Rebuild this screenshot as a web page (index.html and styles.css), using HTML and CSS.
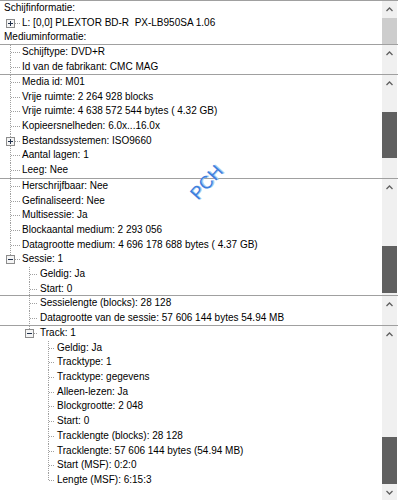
FILE: index.html
```html
<!DOCTYPE html>
<html>
<head>
<meta charset="utf-8">
<link rel="stylesheet" href="styles.css">
</head>
<body>
<div class="view">
  <div class="panel p1">
    <div class="tree">
      <div class="row"><span class="txt">Schijfinformatie:</span></div>
      <div class="row"><span class="g c1 bx-h"><span class="box plus"></span></span><span class="txt">L: [0,0] PLEXTOR BD-R  PX-LB950SA 1.06</span></div>
      <div class="row"><span class="txt">Mediuminformatie:</span></div>
    </div>
    <div class="sb">
      <div class="arr"><svg width="7" height="5" viewBox="0 0 7 5"><path d="M0.5 4 L3.5 1 L6.5 4" fill="none" stroke="#606060" stroke-width="1.3"/></svg></div>
      <div class="thumb light grow"></div>
    </div>
  </div>

  <div class="panel p2">
    <div class="tree">
      <div class="row"><span class="g c1 tee"></span><span class="txt">Schijftype: DVD+R</span></div>
      <div class="row"><span class="g c1 tee"></span><span class="txt">Id van de fabrikant: CMC MAG</span></div>
    </div>
    <div class="sb">
      <div class="arr"><svg width="7" height="5" viewBox="0 0 7 5"><path d="M0.5 4 L3.5 1 L6.5 4" fill="none" stroke="#606060" stroke-width="1.3"/></svg></div>
    </div>
  </div>

  <div class="panel p3">
    <div class="tree">
      <div class="row"><span class="g c1 tee"></span><span class="txt">Media id: M01</span></div>
      <div class="row"><span class="g c1 tee"></span><span class="txt">Vrije ruimte: 2 264 928 blocks</span></div>
      <div class="row"><span class="g c1 tee"></span><span class="txt">Vrije ruimte: 4 638 572 544 bytes ( 4.32 GB)</span></div>
      <div class="row"><span class="g c1 tee"></span><span class="txt">Kopieersnelheden: 6.0x...16.0x</span></div>
      <div class="row"><span class="g c1 bx-tee"><span class="box plus"></span></span><span class="txt">Bestandssystemen: ISO9660</span></div>
      <div class="row"><span class="g c1 tee"></span><span class="txt">Aantal lagen: 1</span></div>
      <div class="row"><span class="g c1 tee"></span><span class="txt">Leeg: Nee</span></div>
    </div>
    <div class="sb">
      <div class="arr"><svg width="7" height="5" viewBox="0 0 7 5"><path d="M0.5 4 L3.5 1 L6.5 4" fill="none" stroke="#606060" stroke-width="1.3"/></svg></div>
      <div class="track t20"></div>
      <div class="thumb dark h46"></div>
    </div>
  </div>

  <div class="panel p4">
    <div class="tree">
      <div class="row"><span class="g c1 tee"></span><span class="txt">Herschrijfbaar: Nee</span></div>
      <div class="row"><span class="g c1 tee"></span><span class="txt">Gefinaliseerd: Nee</span></div>
      <div class="row"><span class="g c1 tee"></span><span class="txt">Multisessie: Ja</span></div>
      <div class="row"><span class="g c1 tee"></span><span class="txt">Blockaantal medium: 2 293 056</span></div>
      <div class="row"><span class="g c1 tee"></span><span class="txt">Datagrootte medium: 4 696 178 688 bytes ( 4.37 GB)</span></div>
      <div class="row"><span class="g c1 bx-ell"><span class="box minus"></span></span><span class="txt">Sessie: 1</span></div>
      <div class="row"><span class="g c1"></span><span class="g c2 tee"></span><span class="txt">Geldig: Ja</span></div>
      <div class="row"><span class="g c1"></span><span class="g c2 tee"></span><span class="txt">Start: 0</span></div>
    </div>
    <div class="sb">
      <div class="arr"><svg width="7" height="5" viewBox="0 0 7 5"><path d="M0.5 4 L3.5 1 L6.5 4" fill="none" stroke="#606060" stroke-width="1.3"/></svg></div>
      <div class="track t50"></div>
      <div class="thumb dark h47"></div>
    </div>
  </div>

  <div class="panel p5">
    <div class="tree">
      <div class="row"><span class="g c1"></span><span class="g c2 tee"></span><span class="txt">Sessielengte (blocks): 28 128</span></div>
      <div class="row"><span class="g c1"></span><span class="g c2 tee"></span><span class="txt">Datagrootte van de sessie: 57 606 144 bytes 54.94 MB</span></div>
    </div>
    <div class="sb">
      <div class="arr"><svg width="7" height="5" viewBox="0 0 7 5"><path d="M0.5 4 L3.5 1 L6.5 4" fill="none" stroke="#606060" stroke-width="1.3"/></svg></div>
    </div>
  </div>

  <div class="panel p6">
    <div class="tree">
      <div class="row"><span class="g c1"></span><span class="g c2 bx-ell"><span class="box minus"></span></span><span class="txt">Track: 1</span></div>
      <div class="row"><span class="g c1"></span><span class="g c2"></span><span class="g c3 tee"></span><span class="txt">Geldig: Ja</span></div>
      <div class="row"><span class="g c1"></span><span class="g c2"></span><span class="g c3 tee"></span><span class="txt">Tracktype: 1</span></div>
      <div class="row"><span class="g c1"></span><span class="g c2"></span><span class="g c3 tee"></span><span class="txt">Tracktype: gegevens</span></div>
      <div class="row"><span class="g c1"></span><span class="g c2"></span><span class="g c3 tee"></span><span class="txt">Alleen-lezen: Ja</span></div>
      <div class="row"><span class="g c1"></span><span class="g c2"></span><span class="g c3 tee"></span><span class="txt">Blockgrootte: 2 048</span></div>
      <div class="row"><span class="g c1"></span><span class="g c2"></span><span class="g c3 tee"></span><span class="txt">Start: 0</span></div>
      <div class="row"><span class="g c1"></span><span class="g c2"></span><span class="g c3 tee"></span><span class="txt">Tracklengte (blocks): 28 128</span></div>
      <div class="row"><span class="g c1"></span><span class="g c2"></span><span class="g c3 tee"></span><span class="txt">Tracklengte: 57 606 144 bytes (54.94 MB)</span></div>
      <div class="row"><span class="g c1"></span><span class="g c2"></span><span class="g c3 tee"></span><span class="txt">Start (MSF): 0:2:0</span></div>
      <div class="row"><span class="g c1"></span><span class="g c2"></span><span class="g c3 ell"></span><span class="txt">Lengte (MSF): 6:15:3</span></div>
    </div>
    <div class="sb">
      <div class="arr"><svg width="7" height="5" viewBox="0 0 7 5"><path d="M0.5 4 L3.5 1 L6.5 4" fill="none" stroke="#606060" stroke-width="1.3"/></svg></div>
      <div class="track t94"></div>
      <div class="thumb dark h47"></div>
      <div class="arr down"><svg width="7" height="5" viewBox="0 0 7 5"><path d="M0.5 1 L3.5 4 L6.5 1" fill="none" stroke="#606060" stroke-width="1.3"/></svg></div>
    </div>
  </div>

  <div class="wm">PCH</div>
</div>
</body>
</html>
```

FILE: styles.css
```css
html, body {
  margin: 0;
  padding: 0;
  background: #fff;
}
.view {
  position: relative;
  width: 398px;
  height: 500px;
  overflow: hidden;
  font-family: "Liberation Sans", Arial, sans-serif;
  font-size: 10px;
  color: #000;
}
.panel {
  display: flex;
  border-top: 1px solid #a0a0a0;
  overflow: hidden;
}
.p1 { height: 43px; }
.p2 { height: 29px; }
.p3 { height: 103px; }
.p4 { height: 116px; }
.p5 { height: 29px; }
.p6 { height: 174px; }

.tree {
  flex: 1;
  padding-left: 4px;
  overflow: hidden;
}
.row {
  display: flex;
  align-items: center;
  height: 14.7px;
  white-space: pre;
}
.txt {
  line-height: 14.7px;
}

/* guide cells */
.g {
  --x: 6px;
  --v: repeating-linear-gradient(to bottom, #a0a0a0 0 1px, transparent 1px 2px);
  --h: repeating-linear-gradient(to right, #a0a0a0 0 1px, transparent 1px 2px);
  flex: none;
  width: 18px;
  height: 100%;
  display: flex;
  align-items: center;
  background-repeat: no-repeat;
}
.c1 { --x: 6px; }
.c2 { --x: 7px; }
.c3 { --x: 8px; width: 17px; }

.tee {
  background-image: var(--v), var(--h);
  background-position: var(--x) 0, calc(var(--x) + 1px) 7px;
  background-size: 1px 100%, calc(100% - var(--x) - 3px) 1px;
}
.ell {
  background-image: var(--v), var(--h);
  background-position: var(--x) 0, calc(var(--x) + 1px) 7px;
  background-size: 1px 7px, calc(100% - var(--x) - 3px) 1px;
}
.bx-h {
  background-image: var(--h);
  background-position: calc(var(--x) + 5px) 7px;
  background-size: calc(100% - var(--x) - 7px) 1px;
}
.bx-tee {
  background-image: var(--v), var(--h);
  background-position: var(--x) 0, calc(var(--x) + 5px) 7px;
  background-size: 1px 100%, calc(100% - var(--x) - 7px) 1px;
}
.bx-ell {
  background-image: var(--v), var(--h);
  background-position: var(--x) 0, calc(var(--x) + 5px) 7px;
  background-size: 1px 3px, calc(100% - var(--x) - 7px) 1px;
}

.box {
  box-sizing: border-box;
  width: 9px;
  height: 9px;
  margin-left: calc(var(--x) - 4px);
  border: 1px solid #8c8c8c;
  background-color: #f4f4f4;
  background-repeat: no-repeat;
}
.box.minus {
  background-image: linear-gradient(#1f2f4a, #1f2f4a);
  background-position: 1px 3px;
  background-size: 5px 1px;
}
.box.plus {
  background-image: linear-gradient(#1f2f4a, #1f2f4a), linear-gradient(#1f2f4a, #1f2f4a);
  background-position: 1px 3px, 3px 1px;
  background-size: 5px 1px, 1px 5px;
}

/* scrollbars */
.sb {
  flex: none;
  width: 15px;
  margin-right: 1px;
  background: #f0f0f0;
  display: flex;
  flex-direction: column;
}
.arr {
  flex: none;
  height: 17px;
  display: flex;
  align-items: center;
  justify-content: center;
}
.arr.down {
  height: 16px;
}
.arr svg { display: block; }
.track { flex: none; }
.t20 { height: 20px; }
.t50 { height: 50px; }
.t94 { height: 94px; }
.thumb { flex: none; }
.thumb.grow { flex: 1; }
.thumb.light { background: #cdcdcd; }
.thumb.dark { background: #606060; }
.h46 { height: 46px; }
.h47 { height: 47px; }

/* watermark */
.wm {
  position: absolute;
  left: 186px;
  top: 190px;
  font-size: 18px;
  color: #3d7fdc;
  letter-spacing: 0.5px;
  transform: rotate(-48deg);
  transform-origin: 0 0;
  text-shadow: 1px 1px 0 #a9c8f2;
}
```
